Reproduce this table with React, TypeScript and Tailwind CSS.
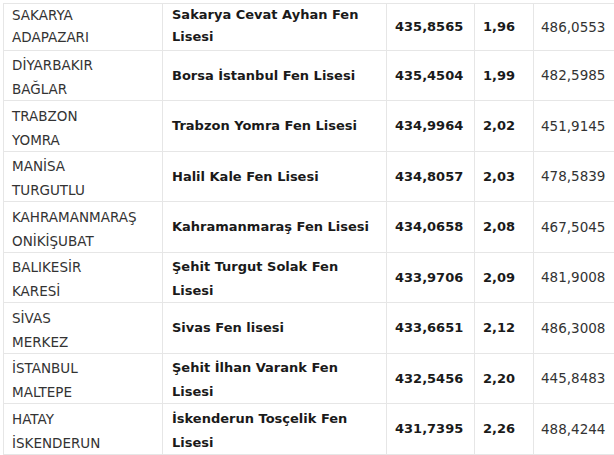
import React from "react"

type Row = {
  city: [string, string]
  school: string[]
  score: string
  pct: string
  max: string
}

const rows: Row[] = [
  { city: ["SAKARYA", "ADAPAZARI"], school: ["Sakarya Cevat Ayhan Fen", "Lisesi"], score: "435,8565", pct: "1,96", max: "486,0553" },
  { city: ["DİYARBAKIR", "BAĞLAR"], school: ["Borsa İstanbul Fen Lisesi"], score: "435,4504", pct: "1,99", max: "482,5985" },
  { city: ["TRABZON", "YOMRA"], school: ["Trabzon Yomra Fen Lisesi"], score: "434,9964", pct: "2,02", max: "451,9145" },
  { city: ["MANİSA", "TURGUTLU"], school: ["Halil Kale Fen Lisesi"], score: "434,8057", pct: "2,03", max: "478,5839" },
  { city: ["KAHRAMANMARAŞ", "ONİKİŞUBAT"], school: ["Kahramanmaraş Fen Lisesi"], score: "434,0658", pct: "2,08", max: "467,5045" },
  { city: ["BALIKESİR", "KARESİ"], school: ["Şehit Turgut Solak Fen", "Lisesi"], score: "433,9706", pct: "2,09", max: "481,9008" },
  { city: ["SİVAS", "MERKEZ"], school: ["Sivas Fen lisesi"], score: "433,6651", pct: "2,12", max: "486,3008" },
  { city: ["İSTANBUL", "MALTEPE"], school: ["Şehit İlhan Varank Fen", "Lisesi"], score: "432,5456", pct: "2,20", max: "445,8483" },
  { city: ["HATAY", "İSKENDERUN"], school: ["İskenderun Tosçelik Fen", "Lisesi"], score: "431,7395", pct: "2,26", max: "488,4244" },
]

// row heights incl. bottom border, first row is cut at the top
const heights = ["h-[47px]", "h-[50px]", "h-[51px]", "h-[50px]", "h-[51px]", "h-[50px]", "h-[51px]", "h-[50px]", "h-[51px]"]

const cell = "border-r border-b border-[#e6e6e6] flex flex-col justify-center px-2"

export default function App() {
  return (
    <div className="w-[614px] h-[455px] overflow-hidden bg-white font-['DejaVu_Sans',Verdana,sans-serif] text-[13px]">
      <div className="ml-[3px] mt-[3px] w-[700px] border-t border-l border-[#e6e6e6] grid grid-cols-[159px_224px_88px_59px_170px]">
        {rows.map((r, i) => {
          const h = heights[i]
          const lead = i === 0 ? "leading-[22px] justify-start" : "leading-[24px]"
          return (
            <React.Fragment key={r.score}>
              <div className={`${cell} ${h} ${lead} text-[13.5px] text-[#333] ${i === 0 ? "" : "pt-[3px]"}`}>
                <span>{r.city[0]}</span>
                <span>{r.city[1]}</span>
              </div>
              <div className={`${cell} ${h} ${lead} pl-[9px] font-bold text-[#1a1a1a] ${r.school.length > 1 && i > 0 ? "pt-[3px]" : ""}`}>
                {r.school.map((s) => (
                  <span key={s} className="whitespace-nowrap">{s}</span>
                ))}
              </div>
              <div className={`${cell} ${h} font-bold text-[#1a1a1a]`}>{r.score}</div>
              <div className={`${cell} ${h} font-bold text-[#1a1a1a]`}>{r.pct}</div>
              <div className={`${cell} ${h} pl-[7px] text-[13.5px] text-[#333]`}>{r.max}</div>
            </React.Fragment>
          )
        })}
      </div>
    </div>
  )
}
